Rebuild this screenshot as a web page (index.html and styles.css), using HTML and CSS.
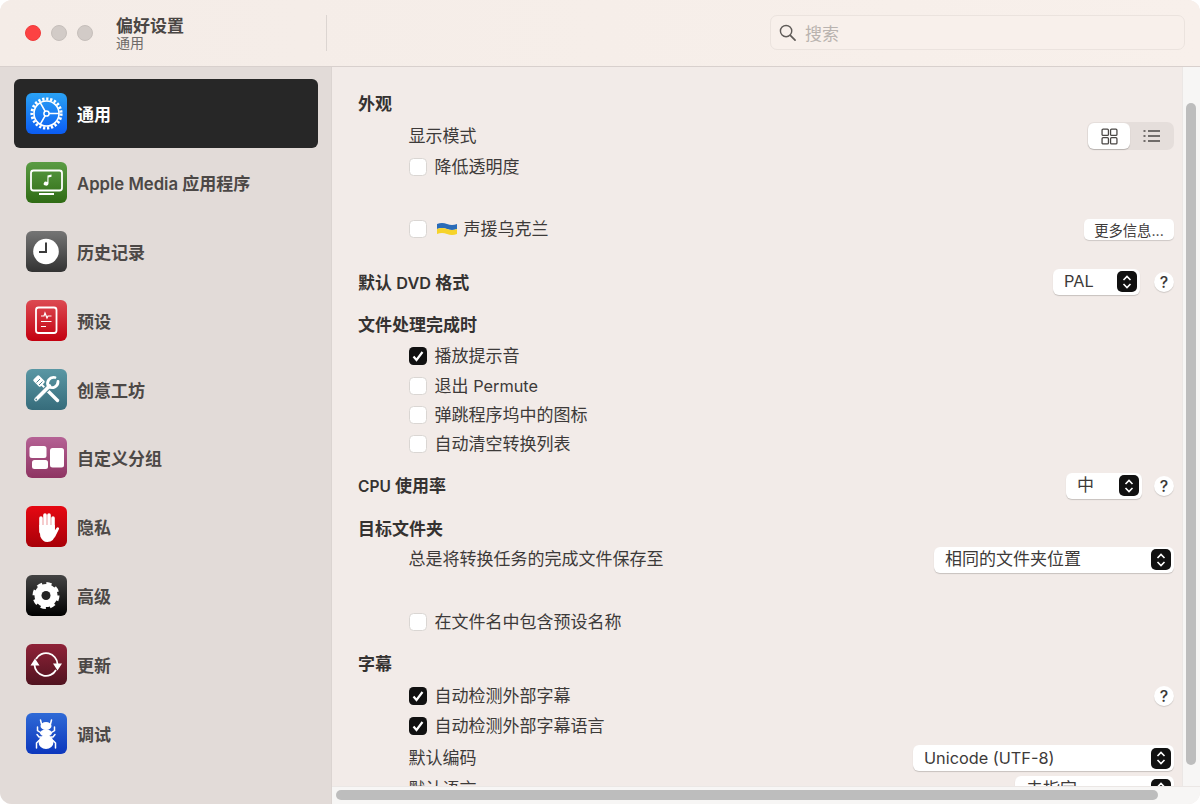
FILE: index.html
```html
<!DOCTYPE html>
<html lang="zh">
<head>
<meta charset="utf-8">
<title>偏好设置</title>
<link rel="stylesheet" href="styles.css">
</head>
<body>
<div class="window">
  <header class="titlebar">
    <div class="lights"><span class="light red"></span><span class="light"></span><span class="light"></span></div>
    <div class="titles"><div class="title">偏好设置</div><div class="subtitle">通用</div></div>
    <div class="divider"></div>
    <div class="search">
      <svg class="search-icon" viewBox="0 0 18 18"><circle cx="7.5" cy="7.5" r="6" fill="none" stroke="#5f5b58" stroke-width="1.5"/><path d="M12 12l5 5" stroke="#5f5b58" stroke-width="1.8" stroke-linecap="round"/></svg>
      <span class="placeholder">搜索</span>
    </div>
  </header>
  <div class="body">
    <nav class="sidebar">
      <div class="item active">
        <div class="icon i-blue"><svg viewBox="0 0 41 41"><circle cx="20.5" cy="20.5" r="14.6" fill="none" stroke="#fff" stroke-width="3" stroke-dasharray="2.3 1.7"/><circle cx="20.5" cy="20.5" r="12.5" fill="none" stroke="#fff" stroke-width="1.6"/><circle cx="20.5" cy="20.5" r="2.6" fill="none" stroke="#fff" stroke-width="1.5"/><path d="M23 20.5h10M19.2 18.3l-5-8.6M19.2 22.7l-5 8.6" stroke="#fff" stroke-width="1.6"/></svg></div>
        <span class="label">通用</span>
      </div>
      <div class="item">
        <div class="icon i-green"><svg viewBox="0 0 41 41"><rect x="5" y="8.5" width="31" height="20" rx="2.5" fill="none" stroke="#fff" stroke-width="1.8"/><path d="M13 32h15" stroke="#fff" stroke-width="1.8"/><path d="M21.5 13.5l4-1v2.2l-3 .7v6.2a2.4 2 0 1 1-1.2-1.7z" fill="#fff"/></svg></div>
        <span class="label"><span class="lat-side">Apple Media</span> 应用程序</span>
      </div>
      <div class="item">
        <div class="icon i-gray"><svg viewBox="0 0 41 41"><circle cx="20" cy="20.5" r="12.8" fill="#fff"/><path d="M20 11.5v9.5h-7" fill="none" stroke="#3c3c3c" stroke-width="2"/></svg></div>
        <span class="label">历史记录</span>
      </div>
      <div class="item">
        <div class="icon i-red"><svg viewBox="0 0 41 41"><rect x="10" y="7.5" width="20.5" height="25.5" rx="2.5" fill="none" stroke="#fff" stroke-width="1.8"/><path d="M15 16h3l1-3 2 5 1-2h3.5M15 21.5h10.5M15 26.5h5" fill="none" stroke="#fff" stroke-width="1.2"/></svg></div>
        <span class="label">预设</span>
      </div>
      <div class="item">
        <div class="icon i-teal"><svg viewBox="0 0 41 41"><path d="M15 15l6 6" stroke="#fff" stroke-width="2"/><path d="M22 22L31.500 31.500" stroke="#fff" stroke-width="3.400" stroke-linecap="round"/><rect x="8" y="8" width="10" height="8" rx="1.500" transform="rotate(45 13 12)" fill="#fff"/><path d="M10.500 13.500l3.500-3.500M13 16l3.500-3.500" stroke="#4f8492" stroke-width="1"/><path d="M23.500 17L10 30.500" stroke="#4f8492" stroke-width="6"/><path d="M23.500 17L10 30.500" stroke="#fff" stroke-width="3.600" stroke-linecap="round"/><circle cx="10.200" cy="30.500" r=".9" fill="#4f8492"/><path d="M29 8.500a6 6 0 0 0-6.500 9 6 6 0 0 0 9.500-5" fill="none" stroke="#fff" stroke-width="2.800" stroke-linecap="round"/></svg></div>
        <span class="label">创意工坊</span>
      </div>
      <div class="item">
        <div class="icon i-pink"><svg viewBox="0 0 41 41"><rect x="3.500" y="9" width="17" height="12" rx="2.500" fill="#fff"/><rect x="6" y="23" width="16" height="9" rx="2.500" fill="#fff"/><rect x="24" y="11" width="14" height="19.500" rx="2.500" fill="#fff"/></svg></div>
        <span class="label">自定义分组</span>
      </div>
      <div class="item">
        <div class="icon i-stop"><svg viewBox="0 0 41 41"><path d="M15 12v14M19 9v14M23 9v14M27 12v14" stroke="#fff" stroke-width="3.600" stroke-linecap="round"/><path d="M13.200 19h15.600v9c0 5-3 8-7.500 8-3.500 0-5.500-2-7-5.500z" fill="#fff"/><path d="M27 27l3.500-5c1-1.500 3-.5 2.500 1l-4.500 9z" fill="#fff"/></svg></div>
        <span class="label">隐私</span>
      </div>
      <div class="item">
        <div class="icon i-black"><svg viewBox="0 0 41 41"><circle cx="20" cy="20.500" r="11.500" fill="#fff"/><circle cx="20" cy="20.500" r="11.500" fill="none" stroke="#fff" stroke-width="4" stroke-dasharray="5 4.030"/><circle cx="20" cy="20.500" r="4.500" fill="#222"/></svg></div>
        <span class="label">高级</span>
      </div>
      <div class="item">
        <div class="icon i-maroon"><svg viewBox="0 0 41 41"><path d="M10 15A11.500 11.500 0 0 1 31.500 20" fill="none" stroke="#fff" stroke-width="1.800"/><path d="M30 26A11.500 11.500 0 0 1 8.500 21" fill="none" stroke="#fff" stroke-width="1.800"/><path d="M27 19.500h9l-4.500 7zM4.500 21.500h9l-4.500-7z" fill="#fff"/></svg></div>
        <span class="label">更新</span>
      </div>
      <div class="item">
        <div class="icon i-navy"><svg viewBox="0 0 41 41"><ellipse cx="20" cy="29" rx="7.500" ry="7" fill="#fff"/><ellipse cx="20" cy="20" rx="6" ry="3.500" fill="#fff"/><ellipse cx="20" cy="13" rx="5.500" ry="4" fill="#fff"/><path d="M14.500 7l1 4M25.500 7l-1 4M11.500 14v3.500l3 2M28.500 14v3.500l-3 2M11 21.500l2 2.500h2M29 21.500l-2 2.500h-2M10.500 35v-5l2.500-2.500M29.500 35v-5l-2.500-2.500" fill="none" stroke="#fff" stroke-width="1.500" stroke-linecap="round"/></svg></div>
        <span class="label">调试</span>
      </div>
    </nav>
    <main class="main">
      <div class="main-top">
        <div class="content">
          <div class="row head"><span>外观</span></div>
          <div class="row indent gap-4"><span>显示模式</span>
            <div class="segmented">
              <div class="seg on"><svg viewBox="0 0 16 16"><g fill="none" stroke="#4a4745" stroke-width="1.200"><rect x="1" y="1" width="6" height="6" rx="1"/><rect x="9" y="1" width="6" height="6" rx="1"/><rect x="1" y="9" width="6" height="6" rx="1"/><rect x="9" y="9" width="6" height="6" rx="1"/></g></svg></div>
              <div class="seg"><svg viewBox="0 0 18 16"><path d="M5 3h12M5 8h12M5 13h12" stroke="#4a4745" stroke-width="1.300"/><path d="M0.500 3h2M0.500 8h2M0.500 13h2" stroke="#4a4745" stroke-width="1.500"/></svg></div>
            </div>
          </div>
          <div class="row indent gap-3"><label class="check"><span class="box"></span><span>降低透明度</span></label></div>
          <div class="row indent gap-34"><label class="check"><span class="box"></span>
            <svg class="flag" viewBox="0 0 20 14"><path d="M0 2q5-2 10 0t10 0v5q-5 2-10 0t-10 0z" fill="#2a6bb8"/><path d="M0 7q5-2 10 0t10 0v5q-5 2-10 0t-10 0z" fill="#f6d32a"/></svg>
            <span>声援乌克兰</span></label>
            <button class="btn">更多信息...</button></div>
          <div class="row head gap-26"><span>默认 <span class="lat">DVD</span> 格式</span>
            <div class="controls"><div class="select w-pal"><span class="lat">PAL</span><span class="stepper"><svg viewBox="0 0 12 16"><path d="M2.500 6l3.500-3.500 3.500 3.500M2.500 10l3.500 3.500 3.500-3.500" fill="none" stroke="#fff" stroke-width="1.600"/></svg></span></div><span class="help">?</span></div></div>
          <div class="row head gap-14"><span>文件处理完成时</span></div>
          <div class="row indent gap-3"><label class="check"><span class="box checked"><svg viewBox="0 0 18 18"><path d="M4.500 9.500l3 3.500 6-8" fill="none" stroke="#fff" stroke-width="2.200"/></svg></span><span>播放提示音</span></label></div>
          <div class="row indent gap-2"><label class="check"><span class="box"></span><span>退出 <span class="lat">Permute</span></span></label></div>
          <div class="row indent gap-1"><label class="check"><span class="box"></span><span>弹跳程序坞中的图标</span></label></div>
          <div class="row indent gap-1"><label class="check"><span class="box"></span><span>自动清空转换列表</span></label></div>
          <div class="row head gap-14"><span><span class="lat-sm">CPU</span> 使用率</span>
            <div class="controls cpu"><div class="select w-cpu"><span>中</span><span class="stepper"><svg viewBox="0 0 12 16"><path d="M2.500 6l3.500-3.500 3.500 3.500M2.500 10l3.500 3.500 3.500-3.500" fill="none" stroke="#fff" stroke-width="1.600"/></svg></span></div><span class="help">?</span></div></div>
          <div class="row head gap-15"><span>目标文件夹</span></div>
          <div class="row indent gap-4"><span class="raise">总是将转换任务的完成文件保存至</span>
            <div class="select w-folder raise"><span>相同的文件夹位置</span><span class="stepper"><svg viewBox="0 0 12 16"><path d="M2.500 6l3.500-3.500 3.500 3.500M2.500 10l3.500 3.500 3.500-3.500" fill="none" stroke="#fff" stroke-width="1.600"/></svg></span></div></div>
          <div class="row indent gap-33"><label class="check"><span class="box"></span><span>在文件名中包含预设名称</span></label></div>
          <div class="row head gap-14"><span>字幕</span></div>
          <div class="row indent gap-4"><label class="check"><span class="box checked"><svg viewBox="0 0 18 18"><path d="M4.500 9.500l3 3.500 6-8" fill="none" stroke="#fff" stroke-width="2.200"/></svg></span><span>自动检测外部字幕</span></label><span class="help">?</span></div>
          <div class="row indent gap-2"><label class="check"><span class="box checked"><svg viewBox="0 0 18 18"><path d="M4.500 9.500l3 3.500 6-8" fill="none" stroke="#fff" stroke-width="2.200"/></svg></span><span>自动检测外部字幕语言</span></label></div>
          <div class="row indent gap-4"><span>默认编码</span>
            <div class="select w-enc"><span class="lat">Unicode (UTF-8)</span><span class="stepper"><svg viewBox="0 0 12 16"><path d="M2.500 6l3.500-3.500 3.500 3.500M2.500 10l3.500 3.500 3.500-3.500" fill="none" stroke="#fff" stroke-width="1.600"/></svg></span></div></div>
          <div class="row indent gap-3"><span>默认语言</span>
            <div class="select w-lang"><span>未指定</span><span class="stepper"><svg viewBox="0 0 12 16"><path d="M2.500 6l3.500-3.500 3.500 3.500M2.500 10l3.500 3.500 3.500-3.500" fill="none" stroke="#fff" stroke-width="1.600"/></svg></span></div></div>
        </div>
        <div class="vbar"><div class="vthumb"></div></div>
      </div>
      <div class="hbar"><div class="hthumb"></div></div>
    </main>
  </div>
</div>
</body>
</html>
```

FILE: styles.css
```css
* { box-sizing: border-box; }
html, body { margin: 0; height: 100%; background: #fff; }
body { font-family: Inter, "Noto Sans CJK SC", sans-serif; font-size: 17px; color: #3d3a39; overflow: hidden; }
.window { width: 1200px; height: 804px; border-radius: 12px; overflow: hidden; display: flex; flex-direction: column; background: #f2ebe8; }
.lat { font-size: 16.300px; }
.lat-sm { font-size: 15.500px; }
.lat-side { font-size: 16.700px; }

.titlebar { height: 67px; flex: none; display: flex; align-items: center; padding: 0 15px 1px 25px; background: linear-gradient(90deg, #f4ece7, #f8f0eb); border-bottom: 1px solid #d8d0cd; }
.lights { display: flex; gap: 10px; width: 91px; flex: none; }
.light { width: 16px; height: 16px; border-radius: 50%; background: #d2cbc7; border: 1px solid #c6bfbb; }
.light.red { background: #fc4243; border-color: #f03c3c; }
.titles { width: 210px; flex: none; line-height: 1; }
.title { font-size: 17px; font-weight: 600; color: #4a4644; line-height: 20px; margin-top: 1px; }
.subtitle { font-size: 14px; color: #6e6a68; line-height: 16px; margin-top: -1px; }
.divider { width: 1px; height: 36px; background: #dcd5d1; flex: none; }
.search { margin-left: auto; width: 415px; height: 35px; border: 1px solid #ebe3de; border-radius: 7px; background: #f8f0eb; display: flex; align-items: center; padding-left: 8px; }
.search-icon { width: 17px; height: 17px; flex: none; }
.placeholder { margin-left: 9px; font-size: 17px; color: #b9b3af; }

.body { flex: 1; display: flex; min-height: 0; }
.sidebar { width: 332px; flex: none; background: #e2dbd8; border-right: 1px solid #dbd4d1; padding: 12px 13px 0 14px; }
.item { height: 68.900px; display: flex; align-items: center; padding-left: 12px; border-radius: 6px; font-size: 17px; font-weight: 600; color: #4c4846; }
.item.active { background: #272727; color: #fff; }
.label { margin-left: 10px; }
.icon { width: 41px; height: 41px; border-radius: 6px; flex: none; }
.icon svg { display: block; width: 41px; height: 41px; }
.i-blue { background: linear-gradient(#2aa2f5, #0b5cf3); }
.i-green { background: linear-gradient(#5a9c44, #2f6b14); }
.i-gray { background: linear-gradient(#757575, #333); }
.i-red { background: linear-gradient(#dc4a52, #c30010); }
.i-teal { background: linear-gradient(#5a97a4, #366c7b); }
.i-pink { background: linear-gradient(#b56295, #8e3462); }
.i-stop { background: linear-gradient(#e60812, #a80008); }
.i-black { background: linear-gradient(#444, #000); }
.i-maroon { background: linear-gradient(#8f2238, #50131f); }
.i-navy { background: linear-gradient(#2f6ad6, #0c37bd); }

.main { flex: 1; min-width: 0; display: flex; flex-direction: column; }
.main-top { flex: 1; min-height: 0; display: flex; }
.content { flex: 1; min-width: 0; overflow: hidden; padding: 23px 7px 0 26px; }
.row { height: 28px; display: flex; align-items: center; justify-content: space-between; font-size: 17px; line-height: 1; white-space: nowrap; }
.head { font-weight: 600; color: #353231; }
.indent { padding-left: 50.500px; }
.gap-1 { margin-top: 1px; }
.gap-2 { margin-top: 2px; }
.gap-3 { margin-top: 3px; }
.gap-4 { margin-top: 4px; }
.gap-14 { margin-top: 14px; }
.gap-15 { margin-top: 15px; }
.gap-26 { margin-top: 26px; }
.gap-33 { margin-top: 33px; }
.gap-34 { margin-top: 34px; }
.raise { margin-bottom: 3px; }
.check { display: flex; align-items: center; }
.box { width: 18px; height: 18px; border-radius: 4.500px; background: #fff; border: 1px solid #dad6d3; margin-right: 8px; flex: none; }
.box svg { display: block; width: 18px; height: 18px; }
.box.checked { background: #111; border: 0; }
.flag { width: 20px; height: 14px; margin: 0 7px 0 2px; flex: none; }

.segmented { width: 87px; height: 28px; margin-right: 1px; background: #e5dedb; border-radius: 7px; display: flex; padding: 1px; }
.seg { width: 42px; display: flex; align-items: center; justify-content: center; border-radius: 6px; }
.seg svg { width: 17px; height: 17px; }
.seg + .seg svg { width: 18px; height: 16px; margin-left: 2px; }
.seg.on { background: #fff; box-shadow: 0 1px 1px rgba(0,0,0,.2); }
.btn { width: 90px; height: 21px; margin-right: 1px; border: 0; padding: 0; background: #fff; border-radius: 5px; box-shadow: 0 1px 1px rgba(0,0,0,.15); font: 14.300px Inter, "Noto Sans CJK SC", sans-serif; color: #3d3a39; }
.controls { display: flex; align-items: center; gap: 14px; margin-bottom: 3px; }
.controls.cpu { gap: 12px; margin-bottom: 1px; }
.select { height: 26px; background: #fff; border-radius: 6px; box-shadow: 0 1px 1px rgba(0,0,0,.18); display: flex; align-items: center; justify-content: space-between; padding: 0 3px 0 11px; font-weight: 400; color: #3d3a39; flex: none; }
.stepper { width: 20px; height: 21px; background: #111; border-radius: 5px; display: flex; align-items: center; justify-content: center; }
.stepper svg { width: 12px; height: 16px; }
.w-pal { width: 87px; }
.w-cpu { width: 76px; }
.w-folder { width: 240px; margin-right: 1px; }
.w-enc { width: 261px; margin-right: 1px; }
.w-lang { width: 159px; margin-right: 1px; }
.help { width: 20px; height: 20px; margin-right: 1px; border-radius: 50%; background: #fff; box-shadow: 0 1px 1px rgba(0,0,0,.15); font-size: 16px; font-weight: 500; color: #3d3a39; display: flex; align-items: center; justify-content: center; }

.vbar { width: 18px; flex: none; background: #f7f6f5; border-left: 1px solid #ebe7e5; padding: 36px 0 0 3px; }
.vthumb { width: 10px; height: 662px; background: #bdbdbd; border-radius: 5px; }
.hbar { height: 18px; flex: none; background: #f7f6f5; border-top: 1px solid #ebe7e5; padding: 3px 0 0 4px; }
.hthumb { width: 822px; height: 10px; background: #bdbdbd; border-radius: 5px; }
```
